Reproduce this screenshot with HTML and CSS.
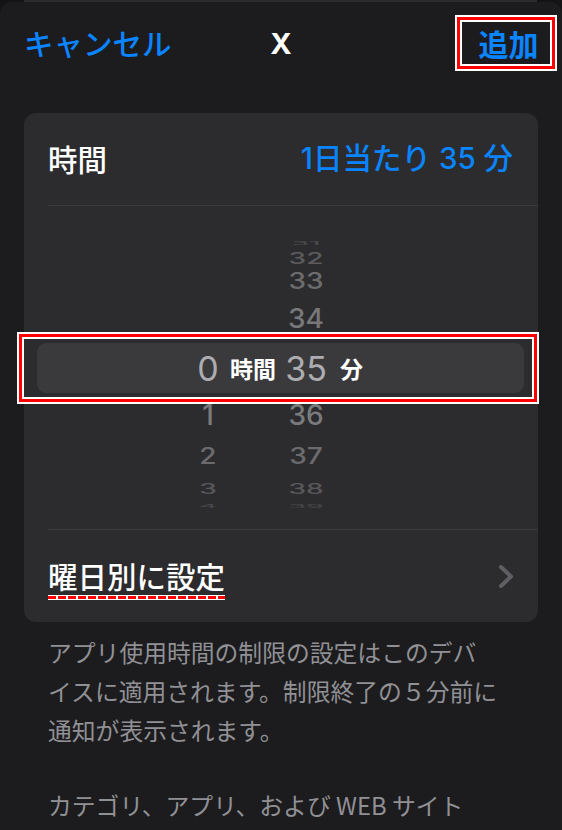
FILE: index.html
```html
<!DOCTYPE html>
<html lang="ja">
<head>
<meta charset="utf-8">
<title>時間制限</title>
<link rel="stylesheet" href="styles.css">
</head>
<body>
<div class="peek"></div>
<div class="sheet">
  <header class="header">
    <span class="cancel">キャンセル</span>
    <span class="title">X</span>
    <span class="add-wrap"><span class="add">追加</span></span>
  </header>

  <section class="card">
    <div class="row">
      <span class="label">時間</span>
      <span class="value">1日当たり 35 分</span>
    </div>
    <div class="sep"></div>

    <div class="picker">
      <div class="prow r31"><span></span><span class="num"><b>&nbsp;</b></span><span></span><span class="num"><b>31</b></span><span></span></div>
      <div class="prow r32"><span></span><span class="num"></span><span></span><span class="num"><b>32</b></span><span></span></div>
      <div class="prow r33"><span></span><span class="num"></span><span></span><span class="num"><b>33</b></span><span></span></div>
      <div class="prow r34"><span></span><span class="num"></span><span></span><span class="num"><b>34</b></span><span></span></div>
      <div class="prow sel">
        <span></span>
        <span class="num"><b>0</b></span>
        <span class="unit unit-h">時間</span>
        <span class="num"><b>35</b></span>
        <span class="unit unit-m">分</span>
      </div>
      <div class="prow r36"><span></span><span class="num"><b>1</b></span><span></span><span class="num"><b>36</b></span><span></span></div>
      <div class="prow r37"><span></span><span class="num"><b>2</b></span><span></span><span class="num"><b>37</b></span><span></span></div>
      <div class="prow r38"><span></span><span class="num"><b>3</b></span><span></span><span class="num"><b>38</b></span><span></span></div>
      <div class="prow r39"><span></span><span class="num"><b>4</b></span><span></span><span class="num"><b>39</b></span><span></span></div>
    </div>

    <div class="sep"></div>
    <div class="row">
      <span class="label underlined">曜日別に設定</span>
      <svg class="chev" width="16" height="25" viewBox="0 0 16 25" aria-hidden="true">
        <polyline points="3,3 13,12.5 3,22" fill="none" stroke="#5e5e63" stroke-width="4" stroke-linecap="round" stroke-linejoin="round"/>
      </svg>
    </div>
  </section>

  <div class="notes">
    <p class="note">アプリ使用時間の制限の設定はこのデバ<br>イスに適用されます。制限終了の５分前に<br>通知が表示されます。</p>
    <p class="note">カテゴリ、アプリ、および WEB サイト</p>
  </div>
</div>
</body>
</html>
```

FILE: styles.css
```css
html, body {
  margin: 0;
  padding: 0;
}

body {
  background: #141416;
  font-family: "Noto Sans CJK JP", "Noto Sans", sans-serif;
  width: 562px;
  height: 830px;
  overflow: hidden;
}

.peek {
  height: 2px;
  margin: 0 25px 0 24px;
  background: #2c2c2e;
}

.sheet {
  background: #1c1c1e;
  border-radius: 12px 12px 0 0;
  height: 828px;
}

/* header */
.header {
  display: grid;
  grid-template-columns: 1fr auto 1fr;
  align-items: center;
  padding: 15px 7px 0 7px;
}

.cancel {
  padding-left: 17px;
  font-size: 29.5px;
  font-weight: 500;
  line-height: 1;
  color: #0a84ff;
  white-space: nowrap;
}

.title {
  font-family: "Inter", "Liberation Sans", sans-serif;
  font-size: 29px;
  font-weight: 700;
  line-height: 1;
  color: #ffffff;
}

.add-wrap {
  display: flex;
  justify-content: flex-end;
}

.add {
  box-sizing: border-box;
  width: 98px;
  height: 52px;
  display: flex;
  align-items: center;
  justify-content: center;
  padding-left: 5px;
  border: 3px solid #ff0000;
  box-shadow: 0 0 0 2px #ffffff, inset 0 0 0 2px #ffffff;
  font-size: 30px;
  font-weight: 700;
  line-height: 1;
  color: #0a84ff;
}

/* card */
.card {
  margin: 44px 24px 0;
  background: #2c2c2e;
  border-radius: 12px;
}

.row {
  height: 92px;
  padding: 0 25px 0 24px;
  display: flex;
  align-items: center;
  justify-content: space-between;
}

.label {
  font-size: 29.5px;
  font-weight: 500;
  line-height: 1;
  color: #ffffff;
  white-space: nowrap;
}

.value {
  font-family: "Inter", "Noto Sans CJK JP", sans-serif;
  font-size: 29.5px;
  font-weight: 500;
  line-height: 1;
  color: #0a84ff;
  white-space: nowrap;
}

.sep {
  height: 1px;
  margin-left: 24px;
  background: #3b3b3f;
}

.underlined {
  position: relative;
}

.underlined::after {
  content: "";
  position: absolute;
  left: 0;
  right: 0;
  top: calc(100% + 4px);
  height: 3px;
  border-top: 1px solid #ffffff;
  border-bottom: 1px solid #ffffff;
  background: repeating-linear-gradient(90deg, #ff0000 0 8px, #ffffff 8px 10px);
}

.chev {
  display: block;
  margin-right: -1px;
}

/* picker */
.picker {
  padding: 23px 14px 25px 13px;
  display: flex;
  flex-direction: column;
}

.prow {
  display: grid;
  grid-template-columns: 150px 42px 51px 52px 1fr;
  align-items: center;
  font-family: "Inter", "Liberation Sans", sans-serif;
  font-size: 28px;
  line-height: 1;
}

.num {
  display: flex;
  justify-content: center;
}

.num b {
  display: block;
  font-weight: 500;
  white-space: nowrap;
}

.r31 { height: 14px; color: #4a4a4d; }
.r31 .num b { transform: scaleY(0.17); }
.r32 { height: 13px; margin-top: 1px; color: #5c5c5f; }
.r32 .num b { transform: scaleY(0.55); }
.r33 { height: 26px; margin-top: 10px; color: #6c6c6f; }
.r33 .num b { transform: scaleY(0.8); }
.r34 { height: 40px; margin-top: 5px; color: #78787b; }
.r34 .num b { transform: scaleY(0.95); }

.sel {
  position: relative;
  height: 50px;
  margin-top: 5px;
  background: #3a3a3d;
  border-radius: 9px;
  color: #adadb1;
}

.sel .num b {
  font-size: 34px;
  font-weight: 400;
  transform: translateY(1px);
}

.sel::after {
  content: "";
  position: absolute;
  top: -9px;
  bottom: -9px;
  left: -18px;
  right: -13px;
  border: 3px solid #ff0000;
  box-shadow: 0 0 0 2px #ffffff, inset 0 0 0 2px #ffffff;
}

.unit {
  font-family: "Noto Sans CJK JP", sans-serif;
  font-size: 23px;
  font-weight: 700;
  color: #ffffff;
  line-height: 1;
  white-space: nowrap;
}

.unit-h { padding-left: 1px; }
.unit-m { padding-left: 8px; }

.r36 { height: 40px; margin-top: 2px; color: #7a7a7d; }
.r36 .num b { transform: scaleY(1); }
.r37 { height: 26px; margin-top: 7px; color: #6b6b6e; }
.r37 .num b { transform: scaleY(0.8); }
.r38 { height: 16px; margin-top: 7px; color: #58585b; }
.r38 .num b { transform: scaleY(0.5); }
.r39 { height: 12px; margin-top: 1px; color: #46464a; }
.r39 .num b { transform: scaleY(0.18); }

/* notes */
.notes {
  padding: 10px 24px 0 48px;
}

.note {
  margin: 0;
  font-size: 23.8px;
  line-height: 39px;
  color: #909095;
  white-space: nowrap;
}

.note + .note {
  margin-top: 36px;
}
```
